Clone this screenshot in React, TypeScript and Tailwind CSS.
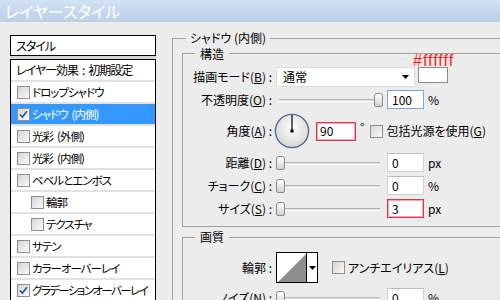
import React from "react";

// Layer style dialog (inner shadow page)

const effects = [
  { label: "ドロップシャドウ" },
  { label: "シャドウ (内側)", checked: true, selected: true },
  { label: "光彩 (外側)" },
  { label: "光彩 (内側)" },
  { label: "ベベルとエンボス" },
  { label: "輪郭", indent: true },
  { label: "テクスチャ", indent: true },
  { label: "サテン" },
  { label: "カラーオーバーレイ" },
  { label: "グラデーションオーバーレイ", checked: true },
];

function Check({ checked }: { checked?: boolean }) {
  return (
    <span className="flex h-[13px] w-[13px] shrink-0 items-center justify-center border border-[#8f8f8f] bg-gradient-to-br from-[#d4d4d4] to-[#fbfbfb]">
      {checked && (
        <svg width="9" height="9" viewBox="0 0 9 9">
          <path d="M1 4.5 L3.4 7 L8 1.2" fill="none" stroke="#2a4c9e" strokeWidth="1.6" />
        </svg>
      )}
    </span>
  );
}

function Label({ text, k }: { text: string; k?: string }) {
  return (
    <div className="w-[89px] shrink-0 whitespace-nowrap text-right">
      {text}
      {k && (
        <>
          (<span className="underline underline-offset-1">{k}</span>)
        </>
      )}{" "}
      :
    </div>
  );
}

function Slider({ right }: { right?: boolean }) {
  return (
    <div className="relative ml-[4px] h-[14px] w-[107px] shrink-0">
      <div className="absolute left-[3px] right-[3px] top-[6px] h-[3px] border-t border-b border-t-[#b4b4b4] border-b-white bg-[#dedede]" />
      <div
        className={
          right
            ? "absolute right-0 top-0 h-[14px] w-[9px] rounded-t-[3px] rounded-b-[2px] border border-[#8a8a8a] bg-gradient-to-b from-white to-[#d2d2d2]"
            : "absolute left-0 top-0 h-[14px] w-[9px] rounded-t-[3px] rounded-b-[2px] border border-[#8a8a8a] bg-gradient-to-b from-white to-[#d2d2d2]"
        }
      />
    </div>
  );
}

function Field({ value, tone }: { value: string; tone?: "red" | "blue" }) {
  const border =
    tone === "red"
      ? "border-[#e0344a] shadow-[inset_0_0_0_1px_#f4a9b2]"
      : tone === "blue"
        ? "border-[#7ea6d2]"
        : "border-[#d2d2d2] border-t-[#bdbdbd]";
  return (
    <div className={`ml-[4px] flex h-[19px] w-[37px] shrink-0 items-center border bg-white pl-[4px] ${border}`}>
      {value}
    </div>
  );
}

function Dial() {
  return (
    <svg width="36" height="36" viewBox="0 0 36 36" className="ml-[2px] shrink-0">
      <defs>
        <radialGradient id="dialFill" cx="50%" cy="40%" r="60%">
          <stop offset="0" stopColor="#ffffff" />
          <stop offset="1" stopColor="#d6d6d6" />
        </radialGradient>
      </defs>
      <circle cx="18" cy="18" r="16.6" fill="url(#dialFill)" stroke="#56688e" strokeWidth="1.4" />
      <line x1="18" y1="18" x2="18" y2="2" stroke="#000" strokeWidth="1.2" />
      <rect x="16.5" y="16.5" width="3" height="3" fill="#000" />
    </svg>
  );
}

export default function App() {
  return (
    <div className="h-[300px] w-[500px] overflow-hidden bg-[#ececec] font-['Noto_Sans_CJK_JP',sans-serif] text-[12px] leading-[14px] text-black [font-feature-settings:'palt']">
      <div className="flex h-[22px] items-center bg-gradient-to-b from-[#d2e1f3] to-[#bccfe7] pl-[5px] text-[16px] text-white">
        レイヤースタイル
      </div>

      <div className="flex items-start">
        {/* left list */}
        <div className="ml-[10px] mt-[13px] w-[146px] shrink-0 text-[11.5px] tracking-[-1px]">
          <div className="flex h-[21px] items-center border border-black bg-white pl-[5px] text-[12px]">スタイル</div>
          <div className="h-[3px] bg-[#d6d6d6]" />
          <div className="border border-black bg-white">
            <div className="flex h-[22px] items-center border-b-2 border-[#e2e2e2] pl-[5px] text-[12px]">
              レイヤー効果<span className="mx-[4px]">:</span>初期設定
            </div>
            {effects.map((e) => {
              const [main, sub] = e.label.split(" ");
              return (
                <div
                  key={e.label}
                  className={
                    (e.selected ? "bg-[#3399ff] text-white " : "") +
                    (e.indent ? "pl-[20px] " : "pl-[6px] ") +
                    "flex h-[22px] items-center gap-[2px] overflow-hidden whitespace-nowrap border-b-2 border-[#e2e2e2]"
                  }
                >
                  <Check checked={e.checked} />
                  <span className={main.length > 10 ? "tracking-[-1.6px]" : ""}>
                    {main}
                    {sub && <span className="ml-[4px]">{sub}</span>}
                  </span>
                </div>
              );
            })}
          </div>
        </div>

        {/* right panel */}
        <div className="ml-[16px] mt-[16px] w-[340px] shrink-0 border-l border-t border-[#a0a0a0]">
          <div className="-mt-[8px] ml-[13px] w-fit bg-[#ececec] px-[4px]">シャドウ (内側)</div>

          <div className="ml-[9px] mt-[8px] border-b border-l border-t border-[#a0a0a0] pb-[8px]">
            <div className="-mt-[7px] ml-[12px] w-fit bg-[#ececec] px-[5px] leading-[13px]">構造</div>

            <div className="mt-[7px] flex h-[20px] items-center">
              <Label text="描画モード" k="B" />
              <div className="ml-[4px] flex h-[20px] w-[139px] items-center justify-between border border-[#dcdcdc] bg-white pl-[6px] pr-[5px]">
                <span>通常</span>
                <svg width="7" height="4" viewBox="0 0 7 4">
                  <polygon points="0,0 7,0 3.5,4" fill="#000" />
                </svg>
              </div>
              <div className="relative ml-[3px] h-[16px] w-[30px] self-start border border-[#8a8a8a] bg-white">
                <span className="absolute -top-[15px] -left-[6px] whitespace-nowrap font-['Liberation_Sans',sans-serif] text-[16px] leading-[16px] tracking-[1px] text-[#ff1a1a]">
                  #ffffff
                </span>
              </div>
            </div>

            <div className="mt-[3px] flex h-[19px] items-center">
              <Label text="不透明度" k="O" />
              <Slider right />
              <Field value="100" tone="blue" />
              <span className="ml-[4px]">%</span>
            </div>

            <div className="mt-[4px] flex h-[36px] items-center">
              <Label text="角度" k="A" />
              <Dial />
              <div className="ml-[6px] flex h-[19px] w-[40px] items-center border border-[#e0344a] bg-white pl-[3px] shadow-[inset_0_0_0_1px_#f4a9b2]">
                90
              </div>
              <span className="ml-[4px] self-start pt-[7px]">°</span>
              <span className="ml-[6px]">
                <Check />
              </span>
              <span className="ml-[3px] whitespace-nowrap">
                包括光源を使用(<span className="underline underline-offset-1">G</span>)
              </span>
            </div>

            <div className="mt-[4px] flex h-[19px] items-center">
              <Label text="距離" k="D" />
              <Slider />
              <Field value="0" />
              <span className="ml-[4px]">px</span>
            </div>

            <div className="mt-[4px] flex h-[19px] items-center">
              <Label text="チョーク" k="C" />
              <Slider />
              <Field value="0" />
              <span className="ml-[4px]">%</span>
            </div>

            <div className="mt-[4px] flex h-[19px] items-center">
              <Label text="サイズ" k="S" />
              <Slider />
              <Field value="3" tone="red" />
              <span className="ml-[4px]">px</span>
            </div>
          </div>

          <div className="ml-[9px] mt-[10px] border-l border-t border-[#a0a0a0] pb-[10px]">
            <div className="-mt-[8px] ml-[12px] w-fit bg-[#ececec] px-[5px]">画質</div>

            <div className="mt-[8px] flex h-[31px] items-center">
              <Label text="輪郭" />
              <div className="ml-[4px] flex h-[31px] w-[42px] shrink-0 border border-black bg-white">
                <svg width="29" height="29" viewBox="0 0 29 29" className="shrink-0">
                  <polygon points="1,29 29,1 29,29" fill="#8f8f8f" />
                </svg>
                <div className="flex flex-1 items-center justify-center border-l border-black">
                  <svg width="7" height="4" viewBox="0 0 7 4">
                    <polygon points="0,0 7,0 3.5,4" fill="#000" />
                  </svg>
                </div>
              </div>
              <span className="ml-[14px]">
                <Check />
              </span>
              <span className="ml-[3px] whitespace-nowrap">
                アンチエイリアス(<span className="underline underline-offset-1">L</span>)
              </span>
            </div>

            <div className="mt-[5px] flex h-[19px] items-center">
              <Label text="ノイズ" k="N" />
              <Slider />
              <Field value="0" />
              <span className="ml-[4px]">%</span>
            </div>
          </div>
        </div>
      </div>
    </div>
  );
}
